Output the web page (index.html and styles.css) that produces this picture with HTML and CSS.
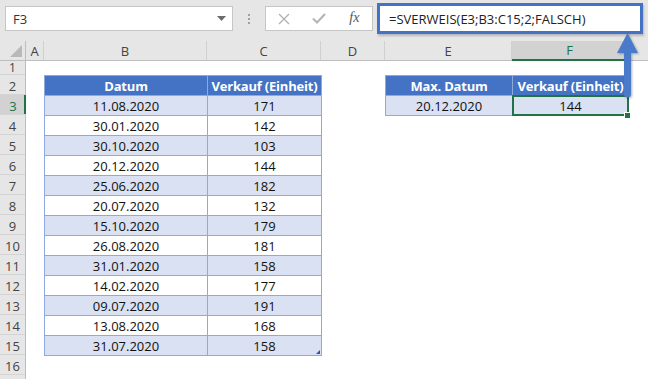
FILE: index.html
```html
<!DOCTYPE html>
<html lang="de">
<head>
<meta charset="utf-8">
<title>SVERWEIS</title>
<link rel="stylesheet" href="styles.css">
</head>
<body>
<div class="app">
  <div class="toolbar">
    <div class="namebox">
      <span>F3</span>
      <svg class="caret" width="9" height="5" viewBox="0 0 9 5"><path d="M0 0H9L4.5 5Z" fill="#6b6b6b"/></svg>
    </div>
    <div class="grip"><i></i><i></i><i></i></div>
    <div class="fbtns">
      <span class="fbtn"><svg width="12" height="12" viewBox="0 0 12 12"><path d="M1 1L11 11M11 1L1 11" stroke="#b3b3b3" stroke-width="1.4" fill="none"/></svg></span>
      <span class="fbtn"><svg width="14" height="11" viewBox="0 0 14 11"><path d="M1 5.5L5 9.5L13 1" stroke="#b3b3b3" stroke-width="2" fill="none"/></svg></span>
      <span class="fbtn fx">fx</span>
    </div>
    <div class="formula">=SVERWEIS(E3;B3:C15;2;FALSCH)</div>
  </div>

  <div class="sheet">
    <div class="corner"><span class="tri"></span></div>
    <div class="ch">A</div>
    <div class="ch">B</div>
    <div class="ch">C</div>
    <div class="ch">D</div>
    <div class="ch">E</div>
    <div class="ch ch-sel">F</div>
    <div class="ch ch-last"></div>

    <div class="rowheads">
      <div class="rh rh1">1</div>
      <div class="rh">2</div>
      <div class="rh rh-sel">3</div>
      <div class="rh">4</div>
      <div class="rh">5</div>
      <div class="rh">6</div>
      <div class="rh">7</div>
      <div class="rh">8</div>
      <div class="rh">9</div>
      <div class="rh">10</div>
      <div class="rh">11</div>
      <div class="rh">12</div>
      <div class="rh">13</div>
      <div class="rh">14</div>
      <div class="rh">15</div>
      <div class="rh">16</div>
      <div class="rh rh-cut"></div>
    </div>

    <table class="tbl t1">
      <colgroup><col class="cb"><col class="cc"></colgroup>
      <thead><tr><th>Datum</th><th>Verkauf (Einheit)</th></tr></thead>
      <tbody>
        <tr class="alt"><td>11.08.2020</td><td>171</td></tr>
        <tr><td>30.01.2020</td><td>142</td></tr>
        <tr class="alt"><td>30.10.2020</td><td>103</td></tr>
        <tr><td>20.12.2020</td><td>144</td></tr>
        <tr class="alt"><td>25.06.2020</td><td>182</td></tr>
        <tr><td>20.07.2020</td><td>132</td></tr>
        <tr class="alt"><td>15.10.2020</td><td>179</td></tr>
        <tr><td>26.08.2020</td><td>181</td></tr>
        <tr class="alt"><td>31.01.2020</td><td>158</td></tr>
        <tr><td>14.02.2020</td><td>177</td></tr>
        <tr class="alt"><td>09.07.2020</td><td>191</td></tr>
        <tr><td>13.08.2020</td><td>168</td></tr>
        <tr class="alt"><td>31.07.2020</td><td class="resize">158</td></tr>
      </tbody>
    </table>

    <table class="tbl t2">
      <colgroup><col class="ce"><col class="cf"></colgroup>
      <thead><tr><th>Max. Datum</th><th>Verkauf (Einheit)</th></tr></thead>
      <tbody>
        <tr class="alt"><td>20.12.2020</td><td class="sel">144</td></tr>
      </tbody>
    </table>
  </div>

  <svg class="arrow" width="26" height="70" viewBox="0 0 26 70">
    <path d="M12.5 3L23 23H16V64Q16 67.5 12.5 67.5Q9 67.5 9 64V23H2Z" fill="#4a7bca"/>
  </svg>
</div>
</body>
</html>
```

FILE: styles.css
```css
html, body {
  margin: 0;
  padding: 0;
  background: #ffffff;
}

body {
  font-family: "Open Sans", "Noto Sans", sans-serif;
  color: #000;
}

.app {
  position: relative;
  width: 648px;
  height: 379px;
  overflow: hidden;
  background: #ffffff;
}

/* ---------- formula bar ---------- */
.toolbar {
  height: 41px;
  box-sizing: border-box;
  padding-bottom: 4px;
  display: flex;
  align-items: center;
  background: #e6e6e6;
}

.namebox {
  margin-left: 5px;
  width: 228px;
  height: 25px;
  box-sizing: border-box;
  border: 1px solid #c6c6c6;
  background: #fff;
  display: flex;
  align-items: center;
  justify-content: space-between;
  padding: 0 6px 0 7px;
  font-size: 13px;
  color: #333;
}

.grip {
  width: 32px;
  display: flex;
  flex-direction: column;
  align-items: center;
  gap: 2px;
}

.grip i {
  display: block;
  width: 2px;
  height: 2px;
  background: #a0a0a0;
}

.fbtns {
  width: 108px;
  height: 25px;
  box-sizing: border-box;
  border: 1px solid #c6c6c6;
  background: #fff;
  display: flex;
  align-items: center;
}

.fbtn {
  flex: 1;
  display: flex;
  align-items: center;
  justify-content: center;
}

.fx {
  font-family: "Liberation Serif", "DejaVu Serif", serif;
  font-style: italic;
  font-size: 14px;
  color: #555;
  padding-bottom: 2px;
}

.formula {
  margin-left: 4px;
  width: 266px;
  height: 31px;
  box-sizing: border-box;
  border: 3px solid #4472c4;
  background: #fff;
  box-shadow: 1px 2px 2px rgba(0, 0, 0, 0.2);
  display: flex;
  align-items: center;
  padding-left: 9px;
  font-size: 13px;
  color: #222;
}

/* ---------- sheet ---------- */
.sheet {
  display: grid;
  grid-template-columns: 26px 18px 163px 114px 64px 127px 116px 1fr;
  grid-template-rows: 20px 14px repeat(15, 20px) 1fr;
  height: 338px;
}

.corner {
  position: relative;
  background: #e6e6e6;
  border-right: 1px solid #bdbdbd;
  border-bottom: 1px solid #bdbdbd;
  box-sizing: border-box;
}

.tri {
  position: absolute;
  right: 3px;
  bottom: 3px;
  width: 0;
  height: 0;
  border-left: 12px solid transparent;
  border-bottom: 12px solid #b9b9b9;
}

.ch {
  background: #e6e6e6;
  border-right: 1px solid #d0d0d0;
  border-bottom: 1px solid #bdbdbd;
  box-sizing: border-box;
  display: flex;
  align-items: center;
  justify-content: center;
  font-size: 13px;
  color: #444;
}

.ch-sel {
  background: #d2d2d2;
  color: #217346;
  border-bottom: 2px solid #217346;
}

.ch-last {
  border-right: none;
}

.rowheads {
  grid-column: 1;
  grid-row: 2 / -1;
  display: grid;
  grid-template-rows: 14px repeat(15, 20px) 1fr;
  background: #e6e6e6;
  border-right: 1px solid #bdbdbd;
}

.rh {
  border-bottom: 1px solid #d4d4d4;
  box-sizing: border-box;
  display: flex;
  align-items: center;
  justify-content: center;
  padding-top: 2px;
  font-size: 13px;
  color: #444;
}

.rh1 {
  padding-top: 0;
  font-size: 12px;
  line-height: 13px;
}

.rh-cut {
  border-bottom: none;
}

.rh-sel {
  background: #d2d2d2;
  color: #217346;
  box-shadow: inset -2px 0 0 #217346;
  margin-right: -1px;
}

/* ---------- tables ---------- */
.tbl {
  border-collapse: collapse;
  table-layout: fixed;
  width: 100%;
  align-self: start;
}

.t1 {
  grid-column: 3 / 5;
  grid-row: 3 / 17;
}

.t2 {
  grid-column: 6 / 8;
  grid-row: 3 / 5;
}

.cb { width: 163px; }
.cc { width: 114px; }
.ce { width: 127px; }
.cf { width: 116px; }

.tbl tr {
  height: 20px;
}

.tbl th,
.tbl td {
  border: 1px solid #8ea9db;
  padding: 0;
  height: 20px;
  box-sizing: border-box;
  text-align: center;
  font-size: 13px;
  line-height: 18px;
  padding-top: 1px;
  white-space: nowrap;
  overflow: visible;
}

.tbl th {
  background: #4472c4;
  color: #fff;
  font-weight: 700;
  letter-spacing: -0.2px;
}

.tbl tr.alt td {
  background: #d9e1f2;
}

.tbl td {
  color: #111;
}

.sel {
  position: relative;
}

.sel::after {
  content: "";
  position: absolute;
  left: -1px;
  top: -1px;
  right: -1px;
  bottom: -1px;
  border: 2px solid #217346;
}

.sel::before {
  content: "";
  position: absolute;
  right: -3px;
  bottom: -4px;
  width: 5px;
  height: 5px;
  background: #217346;
  border: 1px solid #fff;
  z-index: 2;
}

.resize {
  position: relative;
}

.resize::after {
  content: "";
  position: absolute;
  right: 1px;
  bottom: 1px;
  width: 0;
  height: 0;
  border-left: 4px solid transparent;
  border-bottom: 4px solid #2f55a0;
}

/* ---------- annotation arrow ---------- */
.arrow {
  position: absolute;
  left: 615px;
  top: 30px;
  filter: drop-shadow(1px 1px 1px rgba(0, 0, 0, 0.3));
}
```
